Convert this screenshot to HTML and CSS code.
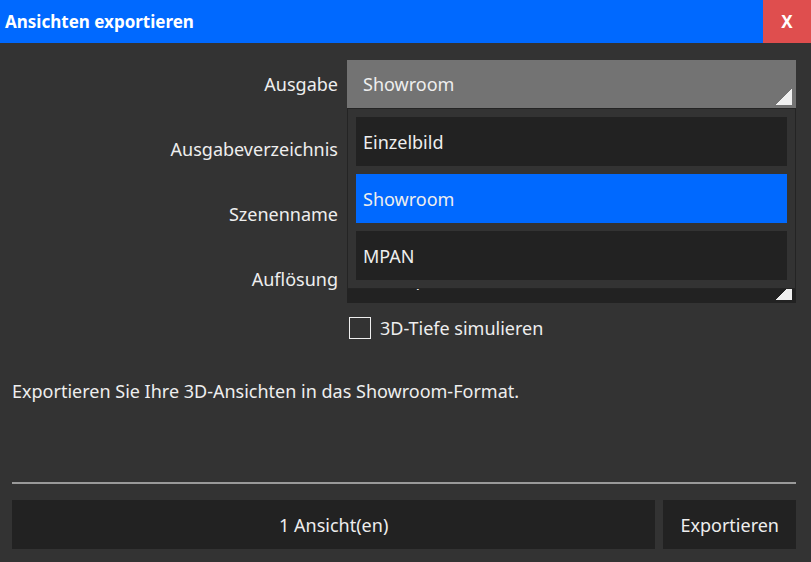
FILE: index.html
```html
<!DOCTYPE html>
<html>
<head>
    <title>Ansichten exportieren</title>
    <link rel="stylesheet" href="styles.css">
</head>
<body>
    <div class="title-bar">
        <span class="title">Ansichten exportieren</span>
        <button class="close-button">X</button>
    </div>

    <div class="content">
        <div class="form">
            <label class="form-label">Ausgabe</label>
            <div class="select-wrap">
                <div class="select select-light">Showroom<span class="corner"></span></div>
                <!-- offene Liste -->
                <div class="dropdown">
                    <div class="dropdown-item">Einzelbild</div>
                    <div class="dropdown-item active">Showroom</div>
                    <div class="dropdown-item">MPAN</div>
                </div>
            </div>

            <label class="form-label">Ausgabeverzeichnis</label>
            <div class="field"></div>

            <label class="form-label">Szenenname</label>
            <div class="field"></div>

            <label class="form-label">Auflösung</label>
            <div class="select">Groß (px)<span class="corner"></span></div>

            <span></span>
            <label class="checkbox-row">
                <span class="checkbox"></span>
                3D-Tiefe simulieren
            </label>
        </div>

        <p class="description">Exportieren Sie Ihre 3D-Ansichten in das Showroom-Format.</p>
    </div>

    <div class="footer">
        <div class="separator"></div>
        <div class="button-row">
            <button class="button button-wide">1 Ansicht(en)</button>
            <button class="button">Exportieren</button>
        </div>
    </div>
</body>
</html>
```

FILE: styles.css
```css
body {
    margin: 0;
    padding: 0;
    height: 100vh;
    background: #333333;
    color: #eeeeee;
    font-family: "Noto Sans", sans-serif;
    font-size: 18px;
    display: flex;
    flex-direction: column;
    overflow: hidden;
}

.title-bar {
    height: 43px;
    background: #0069ff;
    display: flex;
    align-items: center;
    justify-content: space-between;
}

.title {
    padding-left: 5px;
    font-weight: bold;
    font-size: 17px;
    color: #ffffff;
}

.close-button {
    width: 48px;
    height: 43px;
    border: none;
    background: #df4e4e;
    color: #ffffff;
    font-family: inherit;
    font-weight: bold;
    font-size: 17px;
    padding: 0;
}

.content {
    flex: 1;
    padding: 17px 15px 0 12px;
}

.form {
    display: grid;
    grid-template-columns: 326px 449px;
    column-gap: 9px;
    row-gap: 17px;
    align-items: center;
}

.form-label {
    text-align: right;
}

.select-wrap {
    position: relative;
}

.select,
.field {
    position: relative;
    height: 48px;
    background: #222222;
    padding-left: 16px;
    display: flex;
    align-items: center;
    box-sizing: border-box;
}

.select-light {
    background: #737373;
}

.corner {
    position: absolute;
    right: 4px;
    bottom: 3px;
    width: 16px;
    height: 16px;
    background: linear-gradient(to bottom right, transparent 50%, #f0f0f0 50%);
}

.dropdown {
    position: absolute;
    top: 100%;
    left: 0;
    right: 0;
    background: #333333;
    border: 1px solid #242424;
    padding: 8px;
    display: flex;
    flex-direction: column;
    gap: 8px;
    z-index: 10;
}

.dropdown-item {
    height: 49px;
    background: #222222;
    padding-left: 7px;
    display: flex;
    align-items: center;
}

.dropdown-item.active {
    background: #0069ff;
}

.checkbox-row {
    display: flex;
    align-items: center;
    gap: 9px;
    margin-top: -4px;
    margin-left: 2px;
}

.checkbox {
    width: 20px;
    height: 20px;
    border: 1px solid #eeeeee;
}

.description {
    margin: 39px 0 0 0;
}

.footer {
    padding: 0 15px 13px 12px;
}

.separator {
    height: 2px;
    background: #9a9a9a;
    margin-bottom: 16px;
}

.button-row {
    display: flex;
    gap: 8px;
}

.button {
    height: 49px;
    border: none;
    background: #222222;
    color: #eeeeee;
    font-family: inherit;
    font-size: 18px;
    padding: 0 17px;
}

.button-wide {
    flex: 1;
}
```
